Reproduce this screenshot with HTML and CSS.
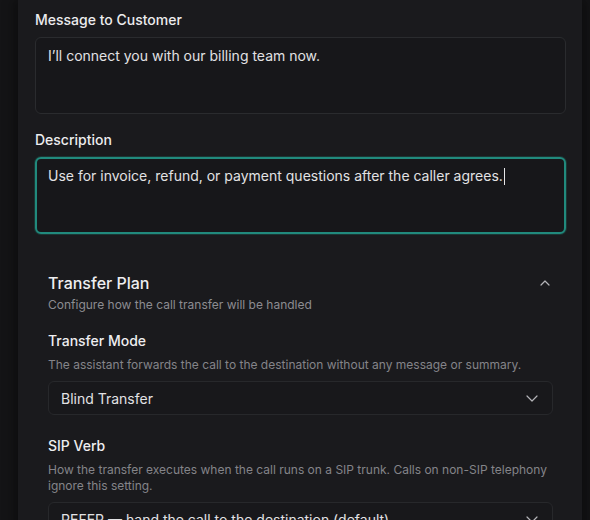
FILE: index.html
```html
<!DOCTYPE html>
<html lang="en">
<head>
  <meta charset="UTF-8">
  <title>Transfer Tool</title>
  <link rel="stylesheet" href="styles.css">
</head>
<body>
  <div class="panel">
    <div class="field">
      <label class="field-label">Message to Customer</label>
      <div class="textarea">I’ll connect you with our billing team now.</div>
    </div>

    <div class="field field-spaced">
      <label class="field-label">Description</label>
      <div class="textarea focused">Use for invoice, refund, or payment questions after the caller agrees.<span class="caret"></span></div>
    </div>

    <div class="card">
      <div class="card-header">
        <div>
          <h3 class="card-title">Transfer Plan</h3>
          <p class="card-subtitle">Configure how the call transfer will be handled</p>
        </div>
        <svg class="chevron-up" width="12" height="12" viewBox="0 0 12 12" fill="none" stroke="#b4b4b8" stroke-width="1.2" stroke-linecap="round" stroke-linejoin="round"><path d="M2 8 L6 4 L10 8"/></svg>
      </div>

      <div class="sub-field first">
        <div class="sub-label">Transfer Mode</div>
        <p class="sub-help">The assistant forwards the call to the destination without any message or summary.</p>
        <div class="select">
          <span>Blind Transfer</span>
          <svg width="14" height="14" viewBox="0 0 14 14" fill="none" stroke="#b4b4b8" stroke-width="1.2" stroke-linecap="round" stroke-linejoin="round"><path d="M2 5 L7 10 L12 5"/></svg>
        </div>
      </div>

      <div class="sub-field">
        <div class="sub-label">SIP Verb</div>
        <p class="sub-help">How the transfer executes when the call runs on a SIP trunk. Calls on non-SIP telephony ignore this setting.</p>
        <div class="select">
          <span>REFER — hand the call to the destination (default)</span>
          <svg width="14" height="14" viewBox="0 0 14 14" fill="none" stroke="#b4b4b8" stroke-width="1.2" stroke-linecap="round" stroke-linejoin="round"><path d="M2 5 L7 10 L12 5"/></svg>
        </div>
      </div>
    </div>
  </div>
</body>
</html>
```

FILE: styles.css
```css
body {
  font-family: Inter, "Noto Sans", sans-serif;
  margin: 0;
  background-color: #141416;
  color: #e6e6e8;
}

.panel {
  margin: 0 8px 0 18px;
  padding: 10px 16px 40px 17px;
  background-color: #1a1a1d;
  min-height: 520px;
  box-sizing: border-box;
  box-shadow: -6px 0 10px rgba(0, 0, 0, 0.25), 6px 0 10px rgba(0, 0, 0, 0.25);
}

.field {
  display: flex;
  flex-direction: column;
  gap: 7px;
}

.field-spaced {
  margin-top: 16px;
}

.field-label {
  font-size: 14px;
  line-height: 20px;
  font-weight: 500;
  color: #ececee;
}

.textarea {
  height: 77px;
  box-sizing: border-box;
  padding: 8px 12px;
  border: 1px solid #2a2b2e;
  border-radius: 6px;
  background-color: #17171a;
  font-size: 14px;
  line-height: 20px;
  color: #e2e2e4;
}

.textarea.focused {
  border: 2px solid #218a7d;
  padding: 7px 11px;
  box-shadow: 0 0 0 1px rgba(33, 138, 125, 0.25);
}

.caret {
  display: inline-block;
  width: 1px;
  height: 17px;
  background-color: #e6e6e8;
  vertical-align: -4px;
  margin-left: 1px;
}

.card {
  margin-top: 17px;
  padding: 20px 13px;
  border-radius: 8px;
}

.card-header {
  display: flex;
  justify-content: space-between;
  align-items: flex-start;
}

.chevron-up {
  margin-top: 6px;
  margin-right: 2px;
}

.card-title {
  margin: 0;
  font-size: 16px;
  line-height: 24px;
  font-weight: 500;
  color: #eeeef0;
}

.card-subtitle {
  margin: 2px 0 0 0;
  font-size: 12px;
  line-height: 16px;
  color: #8c8c91;
}

.sub-field {
  margin-top: 21px;
}

.sub-field.first {
  margin-top: 18px;
}

.sub-label {
  font-size: 14px;
  line-height: 20px;
  font-weight: 500;
  color: #eeeef0;
}

.sub-help {
  margin: 6px 0 8px 0;
  font-size: 12px;
  line-height: 16px;
  color: #848489;
}

.select {
  display: flex;
  align-items: center;
  justify-content: space-between;
  height: 34px;
  box-sizing: border-box;
  padding: 0 13px 0 12px;
  border: 1px solid #27282b;
  border-radius: 6px;
  background-color: #18181b;
  font-size: 14px;
  color: #e2e2e4;
}
```
